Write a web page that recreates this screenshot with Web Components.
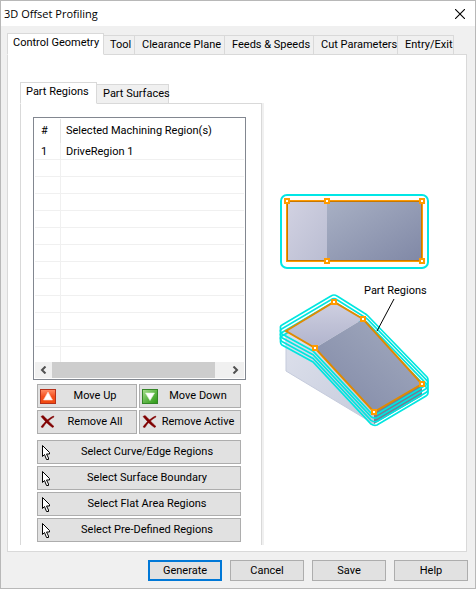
<!DOCTYPE html>
<html lang="en">
<head>
<meta charset="utf-8">
<title>3D Offset Profiling</title>
<style>
html, body { margin: 0; height: 100%; }
body { font: 11px/16px Roboto, "Liberation Sans", sans-serif; color: #000; }
</style>
</head>
<body>
<offset-dialog></offset-dialog>

<script>
function define(name, html, setup) {
  const template = document.createElement("template");
  template.innerHTML = html;
  customElements.define(name, class extends HTMLElement {
    constructor() {
      super();
      this.attachShadow({ mode: "open" }).append(template.content.cloneNode(true));
    }
    connectedCallback() { if (setup) setup(this, this.shadowRoot); }
  });
}

/* Single tab; "selected" raises it over the page border */
define("tab-item", `
<style>
:host { display: flex; flex: none; margin-top: 2px; width: var(--tab-width); }
button { font: inherit; color: inherit; margin: 0; padding: 0 4px 0 6px; width: 100%; height: 20px; white-space: nowrap;
  background: #f0f0f0; border: 1px solid #d9d9d9; border-left: 0; text-align: left; }
:host([wide]) button { padding: 0 5px 0 7px; }
:host([selected]) { margin: 0; }
:host([selected]) button { background: #fff; height: 22px; padding: 0 8px 2px 5px; border-left: 1px solid #d9d9d9; border-bottom-color: #fff; }
</style>
<button type="button" role="tab"><slot></slot></button>`, (el, root) => {
  root.querySelector("button").setAttribute("aria-selected", el.hasAttribute("selected"));
});

/* Tab row on top of a bordered page */
define("tab-frame", `
<style>
:host { display: flex; flex-direction: column; min-width: 0; }
.tabs { display: flex; align-items: flex-start; margin-bottom: -1px; z-index: 1; }
.page { flex: 1; background: #fff; border: 1px solid #d9d9d9; }
:host([open-ended]) .page { border-bottom: 0; box-shadow: 2px 0 0 #f0f0f0; }
</style>
<div class="tabs" role="tablist"><slot name="tab"></slot></div>
<div class="page" role="tabpanel"><slot></slot></div>`);

define("push-button", `
<style>
:host { display: flex; min-width: 0; }
button { font: inherit; color: inherit; margin: 0; box-sizing: border-box; width: 100%; height: 24px; padding: 0 2px;
  background: #e1e1e1; border: 1px solid #adadad; display: flex; align-items: center; white-space: nowrap; }
.icon { flex: none; display: flex; }
.label { flex: 1; text-align: center; }
:host([small]) button { height: 21px; }
:host([default]) button { border: 2px solid #0078d7; }
</style>
<button type="button"><span class="icon"><slot name="icon"></slot></span><span class="label"><slot></slot></span></button>`);

const icons = {
  up: `<defs><linearGradient id="g" x1="0" y1="0" x2="0" y2="1"><stop offset="0" stop-color="#ff8a62"/><stop offset=".5" stop-color="#f5501e"/><stop offset="1" stop-color="#f04a10"/></linearGradient></defs>
    <rect width="16" height="15" fill="#b5301a"/><rect x="1" y="1" width="14" height="13" fill="url(#g)"/><path d="M8 3 12.500 11H3.500Z" fill="#fff" stroke="#ffd8c8" stroke-width=".6"/>`,
  down: `<defs><linearGradient id="g" x1="0" y1="0" x2="1" y2="1"><stop offset="0" stop-color="#a5dc8c"/><stop offset=".5" stop-color="#62b84a"/><stop offset="1" stop-color="#2f9a18"/></linearGradient></defs>
    <rect width="16" height="15" fill="#338526"/><rect x="1" y="1" width="14" height="13" fill="url(#g)"/><path d="M3.500 4H12.500L8 11.500Z" fill="#fff" stroke="#dff5d6" stroke-width=".6"/>`,
  cross: `<path d="M1 1.500 3 .5C6 3 10 8 14 11.500L12.500 12.500C8 9.500 4 5 1 1.500ZM13.500 1 14 2C10 4 5 8.500 3 12.500L1 12C4 7.500 9 3 13.500 1Z" fill="#800000" stroke="#800000" stroke-width=".5"/>`,
  arrow: `<path d="M2.500 .5V11.500L4.500 9.500 6.500 14.500H8.500V13L6.500 9H9.500V7.500Z" fill="#fff" stroke="#000"/>`
};
define("tool-icon", `<style>:host { display: block; width: 16px; height: 15px; } svg { display: block; }</style>
<svg width="16" height="15" viewBox="0 0 16 15" aria-hidden="true"></svg>`, (el, root) => {
  root.querySelector("svg").innerHTML = icons[el.getAttribute("name")];
});

define("region-list", `
<style>
:host { display: block; border: 1px solid #828790; padding: 1px; background: #fff; }
table { width: 100%; border-collapse: separate; border-spacing: 0; table-layout: fixed; }
th, td { font-weight: 400; text-align: left; padding: 0 0 0 5px; box-sizing: border-box; overflow: hidden; white-space: nowrap; }
th { height: 24px; }
td { height: 17px; line-height: 14px; padding-top: 2px; border-bottom: 1px solid #f0f0f0; }
th:first-child { width: 26px; padding-left: 6px; border-right: 1px solid #e5e5e5; }
td:first-child { padding-left: 6px; border-right: 1px solid #f0f0f0; }
tr:last-child td { border-bottom: 0; height: 15px; }
.bar { display: flex; height: 16px; background: #f0f0f0; }
.bar button { flex: none; width: 17px; padding: 0; border: 0; background: none; display: flex; align-items: center; justify-content: center; }
.track { flex: 1; display: flex; }
.thumb { width: 93%; background: #cdcdcd; }
</style>
<table>
<thead><tr><th scope="col">#</th><th scope="col">Selected Machining Region(s)</th></tr></thead>
<tbody><tr><td>1</td><td>DriveRegion 1</td></tr></tbody>
</table>
<div class="bar">
<button type="button" aria-label="Scroll left"><svg width="7" height="8" viewBox="0 0 7 8"><path d="M5.500 .5 2 4 5.500 7.500" fill="none" stroke="#505050" stroke-width="2"/></svg></button>
<div class="track"><div class="thumb"></div></div>
<button type="button" aria-label="Scroll right"><svg width="7" height="8" viewBox="0 0 7 8"><path d="M1.500 .5 5 4 1.500 7.500" fill="none" stroke="#505050" stroke-width="2"/></svg></button>
</div>`, (el, root) => {
  const body = root.querySelector("tbody");
  for (let i = 0; i < 12; i++) body.insertRow().append(document.createElement("td"), document.createElement("td"));
});

define("region-preview", `
<style>
:host { display: block; }
svg { display: block; width: 100%; max-width: 170px; height: auto; }
text { font: 11px Roboto, "Liberation Sans", sans-serif; }
</style>
<svg viewBox="270 185 170 250" role="img" aria-label="Part regions preview">
<defs>
<linearGradient id="lt" x1="0" y1="0" x2="1" y2="1"><stop offset="0" stop-color="#d2d2e2"/><stop offset="1" stop-color="#babdd2"/></linearGradient>
<linearGradient id="dk" x1="0" y1="0" x2="1" y2="1"><stop offset="0" stop-color="#a8b0c4"/><stop offset="1" stop-color="#8088a6"/></linearGradient>
<linearGradient id="tp" x1="0" y1="0" x2="0" y2="1"><stop offset="0" stop-color="#cfd0e1"/><stop offset="1" stop-color="#b0b3cc"/></linearGradient>
<linearGradient id="sl" x1="1" y1="0" x2="0" y2="1"><stop offset="0" stop-color="#a4acc0"/><stop offset="1" stop-color="#8088a6"/></linearGradient>
<linearGradient id="sd" x1="0" y1="0" x2="1" y2="1"><stop offset="0" stop-color="#dee1ec"/><stop offset="1" stop-color="#c5cbdc"/></linearGradient>
<g id="h"><rect x="-3" y="-3" width="6" height="6" fill="#ff9b00"/><rect x="-1" y="-1" width="2" height="2" fill="#fff"/></g>
<path id="ring" d="M280.500 328Q280 326 282 325L331 296Q334 294 337 296L364 313Q366 314 368 316L427 377Q428 378 428 380V382Q428 384 426 385L377 414Q374 415 371 413L313 351L282 334Q280.500 333 280.500 331Z"/>
</defs>
<rect x="281" y="195" width="147" height="73" rx="6" fill="#fff" stroke="#00e6e6" stroke-width="2"/>
<path d="M287 201H327V261H287Z" fill="url(#lt)"/><path d="M327 201H422V261H327Z" fill="url(#dk)"/>
<rect x="287" y="201" width="135" height="60" fill="none" stroke="#c87800" stroke-width="2"/>
<rect x="286.500" y="200.500" width="136" height="61" fill="none" stroke="#ff9b00"/>
<use href="#h" x="287" y="201"/><use href="#h" x="327" y="201"/><use href="#h" x="422" y="201"/><use href="#h" x="327" y="261"/><use href="#h" x="422" y="261"/>
<path d="M286 331 315 348 374 412V424L286 371Z" fill="url(#sd)" stroke="#c5cbdc"/>
<path d="M374 412 422 384V396L374 424Z" fill="#747c94"/>
<g fill="none" stroke="#00e6e0" stroke-width="1.700"><use href="#ring" y="11"/><use href="#ring" y="7.400"/><use href="#ring" y="3.700"/><use href="#ring"/></g>
<path d="M286 331 334 302 363 319 315 348Z" fill="url(#tp)"/>
<path d="M315 348 363 319 422 384 374 412Z" fill="url(#sl)"/>
<path d="M286 331 334 302 363 319 422 384 374 412 315 348Z" fill="none" stroke="#e08a00" stroke-width="2"/>
<use href="#h" x="334" y="302"/><use href="#h" x="363" y="319"/><use href="#h" x="422" y="384"/><use href="#h" x="374" y="412"/><use href="#h" x="315" y="348"/>
<path d="M394 299 377 331" stroke="#000"/>
<text x="364" y="294">Part Regions</text>
</svg>`);

define("offset-dialog", `
<style>
:host { display: flex; flex-direction: column; box-sizing: border-box; min-height: 100%; background: #f0f0f0; border: 1px solid #b8b8b8; }
header { display: flex; align-items: center; justify-content: space-between; height: 25px; background: #fff; padding: 0 10px 0 3px; }
h1 { margin: 0; font: 11px/16px "Open Sans", "Noto Sans", sans-serif; }
header button { display: flex; padding: 0; border: 0; background: none; }
.main { flex: 1; margin: 7px 8px 0 6px; }
.content { display: grid; grid-template-columns: minmax(0, 242fr) minmax(0, 196fr); column-gap: 8px; padding: 27px 0 6px 12px; }
.pane { padding: 13px 15px 3px 12px; }
.tools { display: grid; grid-template-columns: 100fr 102fr; gap: 2px; padding: 4px 5px 0 4px; }
.picks { display: grid; gap: 2px; padding: 6px 5px 0 4px; }
region-preview { margin-top: 103px; }
footer { display: grid; grid-template-columns: repeat(4, minmax(0, 74px)); gap: 8px; justify-content: end; padding: 8px 7px 7px; }
</style>
<header><h1>3D Offset Profiling</h1>
<button type="button" aria-label="Close"><svg width="10" height="10" viewBox="0 0 10 10"><path d="M0 0 10 10M10 0 0 10" stroke="#000" stroke-width="1.100"/></svg></button></header>
<tab-frame class="main">
<tab-item slot="tab" selected style="--tab-width:97px">Control Geometry</tab-item>
<tab-item slot="tab" style="--tab-width:31px">Tool</tab-item>
<tab-item slot="tab" wide style="--tab-width:90px">Clearance Plane</tab-item>
<tab-item slot="tab" wide style="--tab-width:89px">Feeds &amp; Speeds</tab-item>
<tab-item slot="tab" wide style="--tab-width:84px">Cut Parameters</tab-item>
<tab-item slot="tab" wide style="--tab-width:56px">Entry/Exit</tab-item>
<div class="content">
<tab-frame open-ended>
<tab-item slot="tab" selected style="--tab-width:77px">Part Regions</tab-item>
<tab-item slot="tab" style="--tab-width:72px">Part Surfaces</tab-item>
<div class="pane">
<region-list></region-list>
<div class="tools">
<push-button><tool-icon slot="icon" name="up"></tool-icon>Move Up</push-button>
<push-button><tool-icon slot="icon" name="down"></tool-icon>Move Down</push-button>
<push-button><tool-icon slot="icon" name="cross"></tool-icon>Remove All</push-button>
<push-button><tool-icon slot="icon" name="cross"></tool-icon>Remove Active</push-button>
</div>
<div class="picks">
<push-button><tool-icon slot="icon" name="arrow"></tool-icon>Select Curve/Edge Regions</push-button>
<push-button><tool-icon slot="icon" name="arrow"></tool-icon>Select Surface Boundary</push-button>
<push-button><tool-icon slot="icon" name="arrow"></tool-icon>Select Flat Area Regions</push-button>
<push-button><tool-icon slot="icon" name="arrow"></tool-icon>Select Pre-Defined Regions</push-button>
</div>
</div>
</tab-frame>
<region-preview></region-preview>
</div>
</tab-frame>
<footer>
<push-button small default>Generate</push-button>
<push-button small>Cancel</push-button>
<push-button small>Save</push-button>
<push-button small>Help</push-button>
</footer>`);
</script>
</body>
</html>
